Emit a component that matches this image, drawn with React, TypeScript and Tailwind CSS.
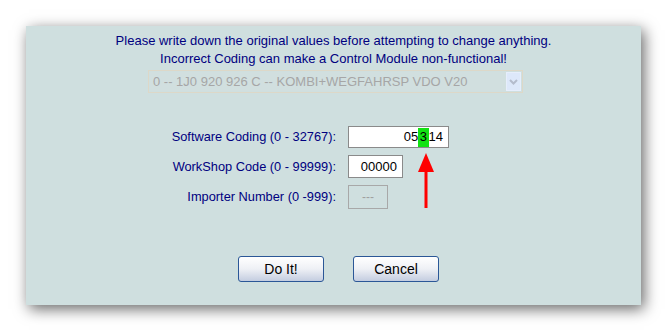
import React from 'react';

const font = { fontFamily: '"Liberation Sans", Arial, sans-serif' };

function CodingDialog() {
  return (
    <div className="relative w-[615px] h-[279px] bg-[#cfdfdf] shadow-[3px_4px_14px_rgba(0,0,0,0.6)] flex flex-col">
      <div className="pt-[6px] flex flex-col items-center text-[13px] leading-[18px] text-[#000080]">
        <p>Please write down the original values before attempting to change anything.</p>
        <p>Incorrect Coding can make a Control Module non-functional!</p>
      </div>

      <div className="mt-[2px] ml-[122px] w-[375px] h-[23px] border border-[#ddd8c8] flex items-center p-[1px]">
        <div className="flex-1 h-full flex items-center px-[3px] text-[13px] text-[#a6a6a6] bg-[#d1dfdf]">
          0 -- 1J0 920 926 C -- KOMBI+WEGFAHRSP VDO V20
        </div>
        <div className="w-[15px] h-full bg-[#dde8fa] border border-[#e6eefc] flex items-center justify-center">
          <svg width="9" height="6" viewBox="0 0 9 6">
            <path d="M1 1 L4.5 4.5 L8 1" stroke="#b4bccc" strokeWidth="2" fill="none" />
          </svg>
        </div>
      </div>

      <div className="mt-[33px] flex flex-col gap-[7px] text-[12.8px] text-[#000080]">
        <div className="flex items-center gap-[12px]">
          <span className="w-[310px] text-right">Software Coding (0 - 32767):</span>
          <div className="w-[101px] h-[22px] bg-white border border-[#8a8a8a] flex items-center justify-end pr-[5px] text-black text-[13px]">
            <span>05</span>
            <span className="bg-[#12e212] h-[19px] flex items-center px-[1.5px]">3</span>
            <span>14</span>
          </div>
        </div>
        <div className="flex items-center gap-[12px]">
          <span className="w-[310px] text-right">WorkShop Code (0 - 99999):</span>
          <div className="w-[55px] h-[23px] bg-white border border-[#8a8a8a] flex items-center justify-end pr-[5px] text-black text-[13px]">
            00000
          </div>
        </div>
        <div className="flex items-center gap-[12px]">
          <span className="w-[310px] text-right">Importer Number (0 -999):</span>
          <div className="w-[40px] h-[24px] border border-[#a8a8a8] flex items-center justify-center text-[#a0a0a0] text-[12px]">
            ---
          </div>
        </div>
      </div>

      <div className="mt-[47px] ml-[212px] flex gap-[29px]">
        {['Do It!', 'Cancel'].map((t) => (
          <button
            key={t}
            className="w-[86px] h-[26px] rounded-[3px] border border-[#2b5797] bg-gradient-to-b from-white via-[#eef0f5] to-[#c4cde0] text-black text-[14px] flex items-center justify-center"
          >
            {t}
          </button>
        ))}
      </div>

      <svg className="absolute left-[389px] top-[126px]" width="22" height="58" viewBox="0 0 22 58">
        <defs>
          <filter id="soft" x="-20%" y="-20%" width="140%" height="140%">
            <feGaussianBlur stdDeviation="0.6" />
          </filter>
        </defs>
        <g filter="url(#soft)" fill="#ff0000">
          <path d="M11 1 L19 20 L3 20 Z" />
          <rect x="9.5" y="19" width="3" height="37" />
        </g>
      </svg>
    </div>
  );
}

export default function App() {
  return (
    <div className="w-[667px] h-[331px] bg-white pl-[26px] pt-[26px] overflow-hidden" style={font}>
      <CodingDialog />
    </div>
  );
}
